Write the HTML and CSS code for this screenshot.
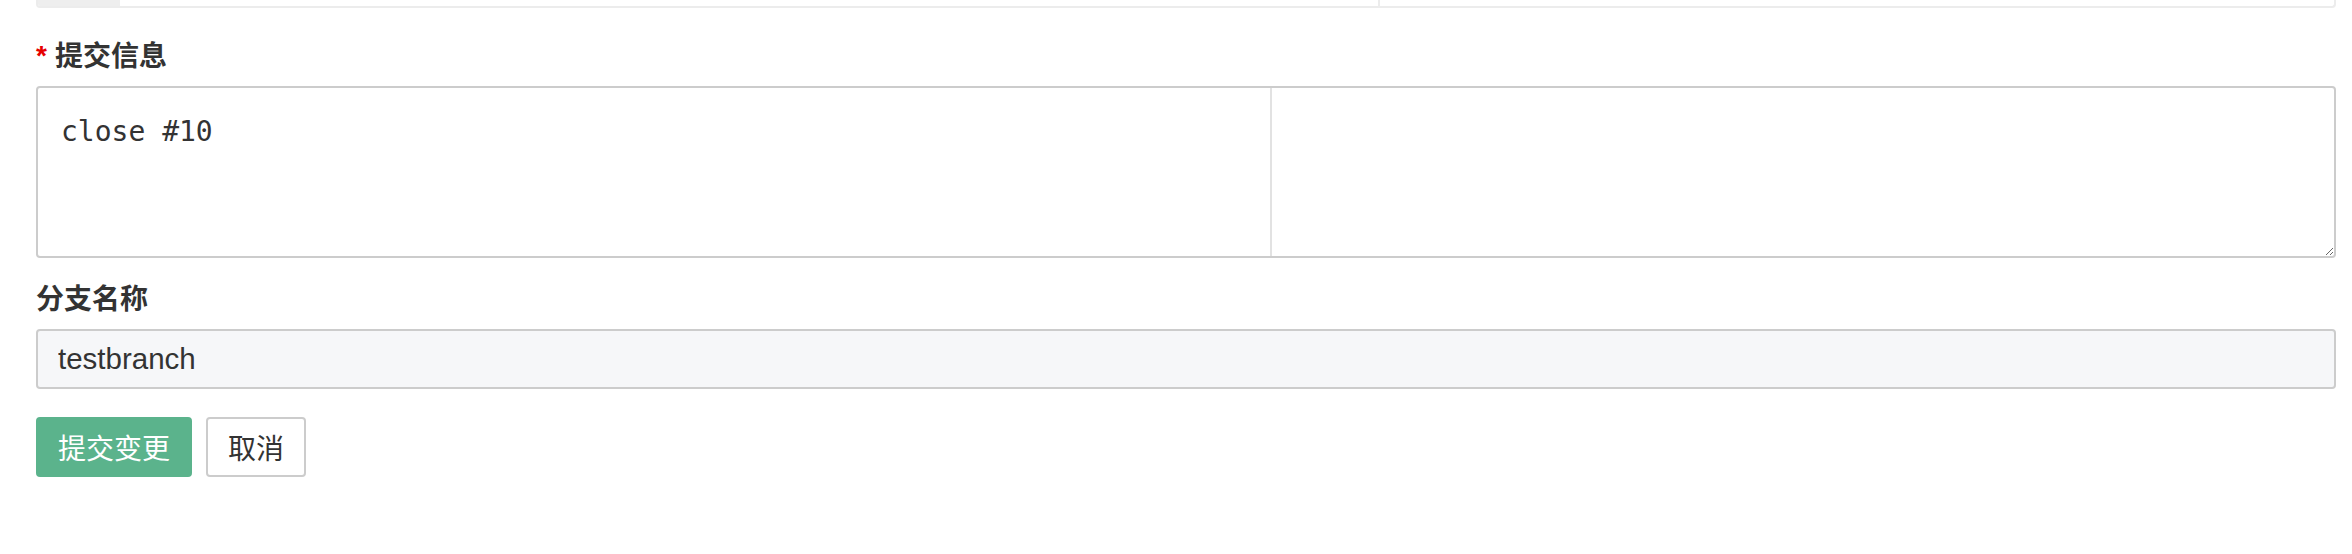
FILE: index.html
```html
<!DOCTYPE html>
<html lang="zh-CN">
<head>
<meta charset="utf-8">
<title>提交变更</title>
<link rel="stylesheet" href="styles.css">
</head>
<body>
<div class="page">
  <div class="topbox">
    <div class="addon"></div>
    <div class="field field-first"></div>
    <div class="field field-second"></div>
  </div>

  <div class="form-group">
    <label class="label"><span class="required">*</span>提交信息</label>
    <textarea class="commit-msg" rows="3">close #10</textarea>
  </div>

  <div class="form-group">
    <label class="label">分支名称</label>
    <input class="text-input" type="text" value="testbranch">
  </div>

  <div class="actions">
    <button class="btn btn-primary" type="button">提交变更</button>
    <button class="btn btn-default" type="button">取消</button>
  </div>
</div>
</body>
</html>
```

FILE: styles.css
```css
* {
  box-sizing: border-box;
}

html, body {
  margin: 0;
  background: #ffffff;
}

body {
  font-family: "Liberation Sans", "Noto Sans CJK SC", sans-serif;
  font-size: 28px;
  line-height: 40px;
  color: #333333;
}

.page {
  padding: 0 16px 0 36px;
}

.topbox {
  display: flex;
  height: 8px;
  border: 2px solid #ececec;
  border-top: 0;
  border-radius: 0 0 4px 4px;
  overflow: hidden;
}

.addon {
  width: 82px;
  background: #eeeeee;
}

.field-first {
  width: 1258px;
}

.field-second {
  flex: 1;
  border-left: 2px solid #ececec;
}

.form-group {
  display: flex;
  flex-direction: column;
}

.label {
  display: flex;
  align-items: center;
  gap: 8px;
  font-weight: bold;
  font-family: "Noto Sans CJK SC", "Liberation Sans", sans-serif;
  font-size: 28px;
  line-height: 40px;
  color: #333333;
  margin-top: 26px;
  margin-bottom: 12px;
}

.form-group + .form-group .label {
  margin-top: 19px;
  margin-bottom: 12px;
}

.required {
  color: #e60000;
  font-family: "Liberation Sans", sans-serif;
  font-size: 28px;
  line-height: 40px;
  position: relative;
  top: 2px;
}

.commit-msg {
  display: block;
  width: 100%;
  height: 172px;
  margin: 0;
  padding: 24px 24px 24px 23px;
  border: 2px solid #cccccc;
  border-radius: 4px;
  font-family: "DejaVu Sans Mono", "Liberation Mono", monospace;
  font-size: 28px;
  line-height: 40px;
  color: #333333;
  background: #ffffff linear-gradient(#e2e2e2, #e2e2e2) no-repeat 1232px 0 / 2px 100%;
  outline: none;
}

.text-input {
  display: block;
  width: 100%;
  height: 60px;
  margin: 0;
  padding: 8px 20px;
  border: 2px solid #cccccc;
  border-radius: 4px;
  background: #f6f7f9;
  font-family: "Liberation Sans", "Noto Sans CJK SC", sans-serif;
  font-size: 29.5px;
  line-height: 40px;
  color: #333333;
  outline: none;
}

.actions {
  display: flex;
  gap: 14px;
  margin-top: 28px;
}

.btn {
  height: 60px;
  padding: 8px 20px;
  border: 2px solid #cccccc;
  border-radius: 4px;
  font-family: "Noto Sans CJK SC", "Liberation Sans", sans-serif;
  font-size: 28px;
  line-height: 40px;
  cursor: pointer;
}

.btn-primary {
  background: #5bb38c;
  border-color: #5bb38c;
  color: #ffffff;
}

.btn-default {
  background: #ffffff;
  color: #333333;
}
```
